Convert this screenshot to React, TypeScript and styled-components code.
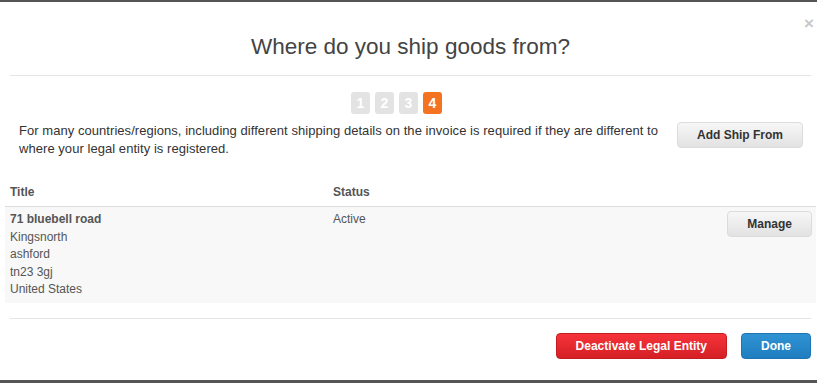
import React from "react";
import styled, { createGlobalStyle, css } from "styled-components";

const GlobalStyle = createGlobalStyle`
  html, body {
    margin: 0;
    padding: 0;
    background: #555;
    overflow: hidden;
  }
  body {
    font-family: "Liberation Sans", Arial, sans-serif;
  }
`;

const Modal = styled.div`
  position: relative;
  width: 821px;
  height: 378px;
  margin-top: 2px;
  background: #fff;
  color: #333;
`;

const Header = styled.div`
  margin: 0 10px;
  padding: 32px 0 15px;
  border-bottom: 1px solid #e5e5e5;
`;

const Title = styled.h2`
  margin: 0;
  font-size: 22.5px;
  line-height: 26px;
  font-weight: normal;
  color: #444;
  text-align: center;
`;

const Close = styled.span`
  position: absolute;
  top: 13px;
  right: 7px;
  font-size: 17px;
  font-weight: bold;
  color: #c8c8c8;
  line-height: 1;
`;

const Steps = styled.div`
  display: flex;
  justify-content: center;
  gap: 5px;
  margin-top: 16px;
  padding-right: 28px;
`;

const Step = styled.span<{ $active?: boolean }>`
  width: 19px;
  height: 22px;
  border-radius: 3px;
  display: flex;
  align-items: center;
  justify-content: center;
  font-size: 14px;
  font-weight: bold;
  color: #fff;
  background: ${(p) => (p.$active ? "#f37321" : "#e3e3e3")};
`;

const Intro = styled.div`
  display: flex;
  align-items: flex-start;
  margin-top: 8px;
  padding: 0 18px 0 19px;
`;

const IntroText = styled.p`
  flex: 1;
  margin: 0 18px 0 0;
  font-size: 13px;
  line-height: 18px;
  letter-spacing: 0.05px;
  color: #333;
`;

const Button = styled.button<{ $variant?: "default" | "danger" | "primary" }>`
  height: 26px;
  padding: 0 19px;
  border-radius: 4px;
  font-family: "Liberation Sans", Arial, sans-serif;
  font-size: 12px;
  font-weight: bold;
  cursor: pointer;
  white-space: nowrap;
  ${(p) =>
    p.$variant === "danger"
      ? css`
          color: #fff;
          background: linear-gradient(#f6343a, #d41f25);
          border: 1px solid #c51c22;
        `
      : p.$variant === "primary"
      ? css`
          color: #fff;
          background: linear-gradient(#2f93d3, #1f7dc0);
          border: 1px solid #1d74b2;
        `
      : css`
          color: #333;
          background: linear-gradient(#f7f7f7, #e2e2e2);
          border: 1px solid #dcdcdc;
        `}
`;

const TableWrap = styled.div`
  margin-top: 21px;
  padding: 0 5px;
`;

const Table = styled.table`
  width: 100%;
  border-collapse: collapse;
  font-size: 12px;
  color: #555;
`;

const Th = styled.th`
  text-align: left;
  font-weight: bold;
  padding: 5px 5px;
  line-height: 17px;
  border-bottom: 1px solid #dcdcdc;
  color: #555;
`;

const Row = styled.tr`
  background: #f8f8f8;
`;

const Td = styled.td<{ $right?: boolean }>`
  vertical-align: top;
  padding: 4px ${(p) => (p.$right ? "4px" : "5px")} 4px 5px;
  line-height: 17.5px;
  text-align: ${(p) => (p.$right ? "right" : "left")};
`;

const AddressLine = styled.div<{ $strong?: boolean }>`
  font-weight: ${(p) => (p.$strong ? "bold" : "normal")};
`;

const Footer = styled.div`
  display: flex;
  justify-content: flex-end;
  gap: 14px;
  margin: 15px 10px 0;
  padding-top: 14px;
  border-top: 1px solid #e5e5e5;
`;

const address = ["Kingsnorth", "ashford", "tn23 3gj", "United States"];

export default function App() {
  return (
    <>
      <GlobalStyle />
      <Modal>
        <Close>×</Close>
        <Header>
          <Title>Where do you ship goods from?</Title>
        </Header>

        <Steps>
          {[1, 2, 3, 4].map((n) => (
            <Step key={n} $active={n === 4}>
              {n}
            </Step>
          ))}
        </Steps>

        <Intro>
          <IntroText>
            For many countries/regions, including different shipping details on the invoice is
            required if they are different to where your legal entity is registered.
          </IntroText>
          <Button>Add Ship From</Button>
        </Intro>

        <TableWrap>
          <Table>
            <colgroup>
              <col style={{ width: 323 }} />
              <col />
              <col />
            </colgroup>
            <thead>
              <tr>
                <Th>Title</Th>
                <Th>Status</Th>
                <Th />
              </tr>
            </thead>
            <tbody>
              <Row>
                <Td>
                  <AddressLine $strong>71 bluebell road</AddressLine>
                  {address.map((line) => (
                    <AddressLine key={line}>{line}</AddressLine>
                  ))}
                </Td>
                <Td>Active</Td>
                <Td $right>
                  <Button>Manage</Button>
                </Td>
              </Row>
            </tbody>
          </Table>
        </TableWrap>

        <Footer>
          <Button $variant="danger">Deactivate Legal Entity</Button>
          <Button $variant="primary">Done</Button>
        </Footer>
      </Modal>
    </>
  );
}
